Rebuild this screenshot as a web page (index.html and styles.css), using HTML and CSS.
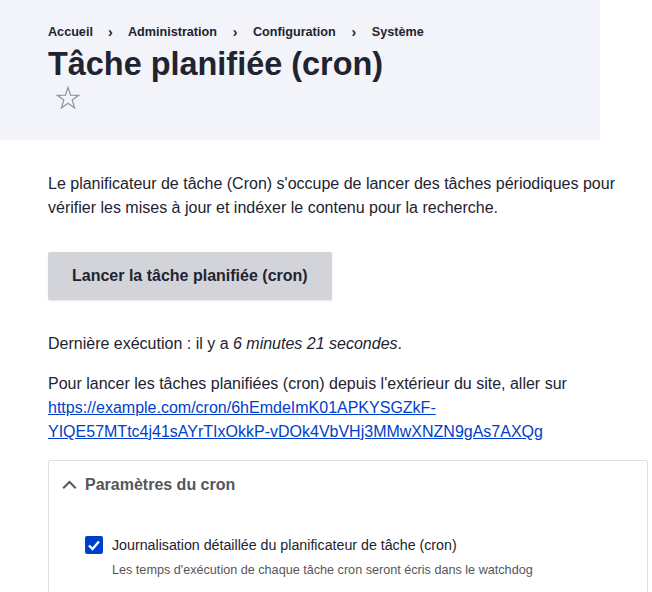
FILE: index.html
```html
<!DOCTYPE html>
<html lang="fr">
<head>
<meta charset="utf-8">
<link rel="stylesheet" href="styles.css">
</head>
<body>
<header class="page-header">
  <nav class="breadcrumb">
    <a href="#">Accueil</a><span class="sep">›</span>
    <a href="#">Administration</a><span class="sep">›</span>
    <a href="#">Configuration</a><span class="sep">›</span>
    <a href="#">Système</a>
  </nav>
  <h1 class="title">Tâche planifiée (cron)</h1>
  <div class="shortcut">
    <svg width="26" height="26" viewBox="0 0 26 26"><polygon points="13,2.5 15.6,10.2 23.7,10.3 17.2,15.1 19.6,22.9 13,18.2 6.4,22.9 8.8,15.1 2.3,10.3 10.4,10.2" fill="none" stroke="#8e929c" stroke-width="1.2" stroke-linejoin="miter"/></svg>
  </div>
</header>
<main class="content">
  <p class="intro">Le planificateur de tâche (Cron) s'occupe de lancer des tâches périodiques pour vérifier les mises à jour et indéxer le contenu pour la recherche.</p>
  <button class="btn">Lancer la tâche planifiée (cron)</button>
  <p class="last">Dernière exécution : il y a <em>6 minutes 21 secondes</em>.</p>
  <p class="url">Pour lancer les tâches planifiées (cron) depuis l'extérieur du site, aller sur <a href="#">https://example.com/cron/6hEmdeImK01APKYSGZkF-YIQE57MTtc4j41sAYrTIxOkkP-vDOk4VbVHj3MMwXNZN9gAs7AXQg</a></p>
  <div class="details">
    <div class="summary">
      <svg class="chev" width="15" height="10" viewBox="0 0 15 10"><path d="M1.2 8.2 L7.5 2 L13.8 8.2" fill="none" stroke="#55565b" stroke-width="2"/></svg>
      <span>Paramètres du cron</span>
    </div>
    <div class="details-body">
      <label class="check">
        <span class="box"><svg width="14" height="12" viewBox="0 0 14 12"><path d="M2 6.5 L5.5 10 L12 2.5" fill="none" stroke="#fff" stroke-width="2.4"/></svg></span>
        <span>Journalisation détaillée du planificateur de tâche (cron)</span>
      </label>
      <div class="desc">Les temps d'exécution de chaque tâche cron seront écris dans le watchdog</div>
    </div>
  </div>
</main>
</body>
</html>
```
FILE: styles.css
```css
html, body {
  margin: 0;
  padding: 0;
  background: #fff;
  font-family: "Liberation Sans", Arial, sans-serif;
  color: #222330;
}
.page-header {
  width: 600px;
  height: 140px;
  box-sizing: border-box;
  padding: 24px 0 0 48px;
  background: #f3f4f9;
}
.breadcrumb {
  font-size: 12.64px;
  font-weight: bold;
  line-height: 17px;
  display: flex;
  align-items: center;
}
.breadcrumb a {
  color: #222330;
  text-decoration: none;
}
.breadcrumb .sep {
  display: inline-block;
  width: 35px;
  text-align: center;
  font-size: 14px;
}
.breadcrumb .sep:nth-of-type(n+2) {
  width: 36px;
}
.title {
  margin: 3px 0 0;
  font-size: 32.43px;
  line-height: 40px;
  font-weight: bold;
}
.shortcut {
  margin-left: 7px;
  margin-top: 1px;
  height: 28px;
}
.content {
  padding: 32px 4px 0 48px;
  font-size: 16px;
  line-height: 24px;
}
.content p {
  margin: 0;
}
.intro {
  margin-bottom: 32px !important;
}
.btn {
  display: block;
  height: 48px;
  padding: 0 24px;
  border: 0;
  border-radius: 2px;
  background: #d3d4d9;
  color: #222330;
  font-family: "Liberation Sans", Arial, sans-serif;
  font-size: 16px;
  font-weight: bold;
  box-shadow: 0 1px 2px rgba(0,0,0,0.1);
}
.last {
  margin-top: 32px !important;
}
.url {
  margin-top: 16px !important;
}
.url a {
  color: #003ecc;
}
.details {
  margin-top: 16px;
  border: 1px solid #dedfe4;
  border-radius: 2px;
  height: 200px;
  box-sizing: border-box;
}
.summary {
  display: flex;
  align-items: center;
  gap: 8px;
  padding: 12px 12px 0 13px;
  height: 24px;
  font-weight: bold;
  color: #55565b;
}
.chev {
  margin-top: 0;
}
.details-body {
  padding: 36px 0 0 36px;
}
.check {
  display: flex;
  align-items: center;
  gap: 9px;
  height: 24px;
  font-size: 14.22px;
}
.box {
  width: 18px;
  height: 18px;
  background: #003ecc;
  border-radius: 2px;
  display: flex;
  align-items: center;
  justify-content: center;
}
.desc {
  margin: 4px 0 0 27px;
  font-size: 12.64px;
  line-height: 18px;
  color: #55565b;
}
```
